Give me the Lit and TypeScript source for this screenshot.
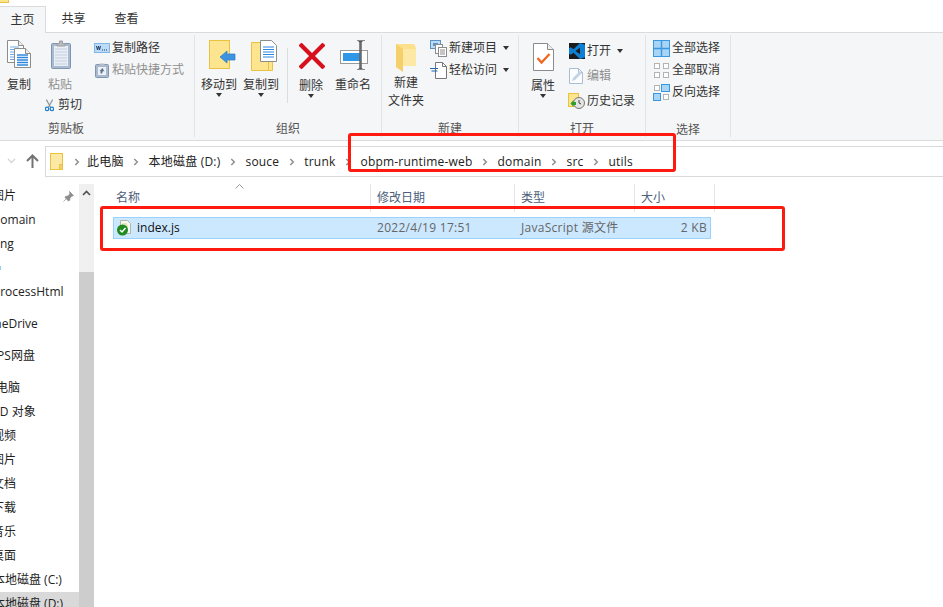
import { LitElement, html, css, svg } from "lit";
import { customElement } from "lit/decorators.js";

const I = {
  copy: svg`<svg width="24" height="28" viewBox="0 0 24 28"><path d="M.5.5h11l5 5v17H.5z" fill="#fff" stroke="#8c8c8c"/><path d="M11.5.5v5h5" fill="#eee" stroke="#8c8c8c"/><path d="M3 7h9M3 9.500h9M3 12h5M3 14.500h5M3 17h5M3 19.500h5" stroke="#6ea8e6"/><path d="M7.500 8.500h11l5 5v14h-16z" fill="#fff" stroke="#8c8c8c"/><path d="M18.500 8.500v5h5" fill="#eee" stroke="#8c8c8c"/><path d="M10 15h11M10 17.500h11M10 20h11M10 22.500h11M10 25h11" stroke="#2f86de" stroke-width="1.300"/></svg>`,
  paste: svg`<svg width="20" height="29" viewBox="0 0 20 29"><rect x=".5" y="3.500" width="19" height="25" rx="1" fill="#a9bad0" stroke="#8095b0"/><rect x="3" y="6" width="14" height="20" fill="#e9eef5"/><path d="M4 9h12M4 12h12M4 15h12M4 18h12M4 21h12M4 24h12" stroke="#c3cfde"/><path d="M6 6V3.500h2.500V1h3v2.500H14V6z" fill="#b9bcc2" stroke="#9a9da3"/></svg>`,
  path: svg`<svg width="16" height="10" viewBox="0 0 16 10"><rect x=".5" y=".5" width="15" height="9" fill="#bcdcf6" stroke="#7fb6e6"/><path d="M2.500 3l1 4 1-4 1 4 1-4" fill="none" stroke="#1f3f66"/><path d="M8 7h1M10 7h1M12 7h1" stroke="#1f3f66"/></svg>`,
  short: svg`<svg width="14" height="16" viewBox="0 0 14 16"><rect x=".5" y="2.500" width="13" height="13" rx="1" fill="#a9bad0" stroke="#8095b0"/><rect x="3" y="5" width="8" height="8" fill="#eef1f5"/><path d="M4.500 1.500h5v2h-5z" fill="#b9bcc2"/><path d="M5.500 11.500V9l-1 .1L7.500 6l2 3.500-1.500-.4-1 2.400z" fill="#5f7591"/></svg>`,
  cut: svg`<svg width="13" height="17" viewBox="0 0 13 17"><path d="M2 0l6 11M11 0L5 11" stroke="#8f949b" stroke-width="1.700" fill="none"/><circle cx="3" cy="13.500" r="2.500" fill="none" stroke="#1f7fd0" stroke-width="1.800"/><circle cx="10" cy="13.500" r="2.500" fill="none" stroke="#1f7fd0" stroke-width="1.800"/></svg>`,
  move: svg`<svg width="27" height="29" viewBox="0 0 27 29"><rect x=".5" y=".5" width="20" height="28" fill="#fde48f" stroke="#e9c23f"/><path d="M11 17l7-6v3h8v6h-8v3z" fill="#3e93e0" stroke="#2a7cc8" stroke-width=".7"/></svg>`,
  copyto: svg`<svg width="27" height="31" viewBox="0 0 27 31"><path d="M.5 2.500h21v28H.5z" fill="#fde48f" stroke="#e9c23f"/><path d="M17.500 3.500v27" stroke="#e9c23f" fill="none"/><path d="M9.500.5h11l5 5v16h-16z" fill="#fff" stroke="#8c8c8c"/><path d="M12 7h11M12 9.500h11M12 12h11M12 14.500h11M12 17h11" stroke="#2f86de"/></svg>`,
  del: svg`<svg width="26" height="26" viewBox="0 0 26 26"><path d="M2.500 2.500l21 21M23.500 2.500l-21 21" stroke="#d8101c" stroke-width="4.200" stroke-linecap="square"/></svg>`,
  rename: svg`<svg width="29" height="30" viewBox="0 0 29 30"><rect x=".5" y="10.500" width="27" height="13" fill="#fff" stroke="#9a9a9a"/><rect x="3" y="13" width="17" height="8" fill="#2f97e8"/><path d="M18 1h5l-1.500 1.500V28L23 29h-5l1.500-1V2.500z" fill="#555"/><path d="M17 .5h8M17 29.500h8" stroke="#8a8a8a"/><rect x="19.500" y="2" width="2" height="26" fill="#6a6a6a"/></svg>`,
  folder: svg`<svg width="21" height="29" viewBox="0 0 21 29"><path d="M0 1h18l2 4v18H7v5l-7-4z" fill="#fce08c"/><path d="M7 6l-7-5v23l7 5z" fill="#f5cf6a"/><path d="M7 6h13v17H7z" fill="#fde9a6"/></svg>`,
  newitem: svg`<svg width="17" height="17" viewBox="0 0 17 17"><rect x=".5" y=".5" width="10" height="8" fill="#bcdcf6" stroke="#5b93c7"/><rect x="3" y="3" width="5" height="3" fill="#5b93c7"/><rect x="5.500" y="4.500" width="7" height="9" fill="#fff" stroke="#8c8c8c"/><rect x="8.500" y="7.500" width="8" height="9" fill="#fff" stroke="#8c8c8c"/><path d="M10 10h5M10 12h5M10 14h5" stroke="#8c8c8c"/></svg>`,
  easy: svg`<svg width="17" height="17" viewBox="0 0 17 17"><path d="M5.500.5h7l4 4v12h-11z" fill="#fff" stroke="#777"/><path d="M12.500.5v4h4" fill="none" stroke="#777"/><path d="M0 6.500h8M1.500 9h6" stroke="#2068b0" stroke-width="1.200"/></svg>`,
  prop: svg`<svg width="21" height="28" viewBox="0 0 21 28"><path d="M.5.500h14l6 6v21H.5z" fill="#fff" stroke="#8c8c8c"/><path d="M14.500.5v6h6" fill="#eee" stroke="#8c8c8c"/><path d="M4.500 15l4 4.500 8-8.500" fill="none" stroke="#f0641e" stroke-width="2.200"/></svg>`,
  vscode: svg`<svg width="16" height="16" viewBox="0 0 16 16"><rect width="16" height="16" fill="#1b1b1b"/><path d="M11 0L4.500 6.300 1.800 4.200 0 5.300v5.400l1.800 1.100 2.700-2.100L11 16l5-1.800V1.800zM11 4.700v6.600L6.500 8z" fill="#0f7fd4"/></svg>`,
  edit: svg`<svg width="15" height="16" viewBox="0 0 15 16"><path d="M.5.500h9l4 4v11H.5z" fill="#fbfcfe" stroke="#a9bdd6"/><path d="M9.500.5v4h4" fill="none" stroke="#a9bdd6"/><path d="M3 13l1-3 7-7 2 2-7 7z" fill="#c3d3e6"/></svg>`,
  history: svg`<svg width="17" height="16" viewBox="0 0 17 16"><rect x=".5" y=".5" width="10" height="13" fill="#fde48f" stroke="#e9c23f"/><circle cx="11" cy="10" r="5.500" fill="#e4e4e4" stroke="#777"/><path d="M11 7v3l2 1" fill="none" stroke="#444"/><path d="M2.500 10.500l3-3.500v2h2.500v3H5.500v2z" fill="#2f9e2f"/></svg>`,
  all: svg`<svg width="17" height="17" viewBox="0 0 17 17"><rect x=".5" y=".5" width="16" height="16" fill="#a8d4f6" stroke="#3a97e2"/><path d="M8.500 0v17M0 8.500h17" stroke="#3a97e2" stroke-width="1.400"/></svg>`,
  none: svg`<svg width="17" height="17" viewBox="0 0 17 17"><g fill="#fff" stroke="#b4b4b4"><rect x="1.500" y="1.500" width="5" height="5"/><rect x="10.500" y="1.500" width="5" height="5"/><rect x="1.500" y="10.500" width="5" height="5"/><rect x="10.500" y="10.500" width="5" height="5"/></g></svg>`,
  inv: svg`<svg width="17" height="17" viewBox="0 0 17 17"><g fill="#fff" stroke="#b4b4b4"><rect x="1.500" y="1.500" width="5" height="5"/><rect x="10.500" y="10.500" width="5" height="5"/></g><g fill="#a8d4f6" stroke="#3a97e2"><rect x="8.500" y=".5" width="8" height="7"/><rect x=".5" y="9.500" width="7" height="7"/></g></svg>`,
  addr: svg`<svg width="13" height="17" viewBox="0 0 13 17"><rect x=".5" y=".5" width="12" height="16" fill="#fde9a6" stroke="#e9c23f"/><path d="M9.500 11.500h3v5h-3z" fill="#f5cf6a" stroke="#e9c23f"/></svg>`,
  file: svg`<svg width="14" height="16" viewBox="0 0 14 16"><path d="M3.500.5h7l3 3v10h-10z" fill="#f7f7f2" stroke="#b5b5ac"/><path d="M5 4h5M5 6h6" stroke="#d6d28a"/><circle cx="5.500" cy="10" r="5.500" fill="#1f8a1f"/><path d="M3 10l2 2 3.500-4" fill="none" stroke="#fff" stroke-width="1.500"/></svg>`,
  pin: svg`<svg width="11" height="11" viewBox="0 0 11 11"><path d="M6.500.5l4 4-1.500.6-2 2-.3 2.200-1.200.7-3.500-3.500.7-1.200 2.200-.3 2-2zM3 8l-2.500 2.500" fill="#8d8d8d" stroke="#8d8d8d" stroke-width=".7"/></svg>`,
  chev: svg`<svg width="6" height="8" viewBox="0 0 6 8"><path d="M1.300 1l3 3-3 3" fill="none" stroke="#8f8f8f" stroke-width="1.500"/></svg>`,
  up: svg`<svg width="13" height="14" viewBox="0 0 13 14"><path d="M6.500 14V2M1 7l5.500-5.500L12 7" fill="none" stroke="#737373" stroke-width="2"/></svg>`,
  down: svg`<svg width="9" height="6" viewBox="0 0 9 6"><path d="M1 1l3.500 3.500L8 1" fill="none" stroke="#d4d4d4" stroke-width="1.300"/></svg>`,
  sbUp: svg`<svg width="9" height="6" viewBox="0 0 9 6"><path d="M1 5l3.500-3.500L8 5" fill="none" stroke="#505050" stroke-width="1.600"/></svg>`,
  sort: svg`<svg width="9" height="5" viewBox="0 0 9 5"><path d="M.5 4.500l4-4 4 4" fill="none" stroke="#9a9a9a"/></svg>`,
};

const navRows = [
  { t: "图片", x: -8, pin: true },
  { t: "domain", x: -7 },
  { t: "ng", x: 0 },
  { t: "", x: 0, mark: true },
  { t: "ProcessHtml", x: -7 },
  { t: "OneDrive", x: -15, gap: true },
  { t: "WPS网盘", x: -14, gap: true },
  { t: "此电脑", x: -16, gap: true },
  { t: "3D 对象", x: -7 },
  { t: "视频", x: -8 },
  { t: "图片", x: -8 },
  { t: "文档", x: -8 },
  { t: "下载", x: -8 },
  { t: "音乐", x: -8 },
  { t: "桌面", x: -8 },
  { t: "本地磁盘 (C:)", x: -7 },
  { t: "本地磁盘 (D:)", x: -7, sel: true },
];
const crumbs = ["此电脑", "本地磁盘 (D:)", "souce", "trunk", "obpm-runtime-web", "domain", "src", "utils"];

@customElement("app-root")
export class AppRoot extends LitElement {
  static styles = css`
    :host { display: block; width: 943px; height: 607px; position: relative; overflow: hidden; background: #fff;
      font: 12px/16px "Open Sans", "Noto Sans CJK SC", sans-serif; color: #333; }
    .top { height: 6px; }
    .qa { display: block; width: 8px; height: 2px; background: #fde48f; border: solid #e9c23f; border-width: 0 1px 1px 0; }
    .tabs { height: 27px; display: flex; border-bottom: 1px solid #dadbdc; box-sizing: border-box; }
    .tab { width: 53px; text-align: center; line-height: 26px; }
    .tab.on { width: 46px; height: 27px; box-sizing: border-box; background: #f5f6f7; border: solid #dadbdc; border-width: 1px 1px 0 0; line-height: 25px; margin-right: 1px; }
    .ribbon { height: 108px; box-sizing: border-box; background: #f5f6f7; border-bottom: 1px solid #dadbdc; display: flex; padding-top: 2px; }
    .group { height: 102px; box-sizing: border-box; border-right: 1px solid #e2e3e4; display: flex; flex-direction: column; }
    .body { height: 85px; display: flex; }
    .glabel { height: 16px; line-height: 18px; text-align: center; color: #555; }
    .big { display: flex; flex-direction: column; align-items: center; padding-top: 5px; box-sizing: border-box; }
    .ibox { height: 36px; display: flex; align-items: flex-start; justify-content: center; box-sizing: border-box; }
    .big.tall .ibox { height: 37px; padding-top: 3px; }
    .big.nf .ibox { height: 34px; padding-top: 3px; }
    .big.sh3 .ibox { padding-left: 6px; }
    .big.sh1 .ibox { padding-left: 2px; }
    .w42 { width: 42px; } .w48 { width: 48px; } .w38 { width: 38px; } .w44 { width: 44px; }
    .big span { line-height: 18px; white-space: nowrap; text-align: center; }
    .dis { color: #8f8f8f; }
    .caret { width: 0; height: 0; border: 3.5px solid transparent; border-top: 4px solid #333; border-bottom: 0; }
    .big .caret { margin-top: -1px; }
    .col { display: flex; flex-direction: column; }
    .row { display: flex; align-items: center; height: 22px; gap: 2px; white-space: nowrap; }
    .row.r25 { height: 25px; }
    .ic { width: 17px; height: 17px; display: flex; align-items: center; justify-content: center; flex: none; }
    .row .caret { margin-left: 4px; }
    .g1 { display: grid; grid-template-columns: 38px 44px auto; grid-template-rows: 60px 20px; }
    .g1 .small { grid-column: 3; grid-row: 1 / 3; margin-left: 11px; padding-top: 2px; }
    .cut { grid-column: 1 / 3; grid-row: 2; margin-left: 45px; display: flex; align-items: center; gap: 4px; height: 20px; white-space: nowrap; }
    .vsep { width: 1px; height: 55px; background: #dcdddf; margin: 13px 2px 0 5px; }
    .addr { height: 36px; box-sizing: border-box; display: flex; align-items: flex-start; padding-top: 5px; }
    .nav { width: 45px; height: 30px; display: flex; align-items: center; padding-left: 7px; gap: 10px; box-sizing: border-box; flex: none; }
    .bar { flex: 1; height: 31px; box-sizing: border-box; border: 1px solid #d9d9d9; border-right: 0; display: flex; align-items: center; padding-left: 4px; color: #222; white-space: nowrap; letter-spacing: .2px; }
    .bar .f { display: flex; margin-right: 11px; }
    .bar .c { width: 25px; display: flex; justify-content: center; flex: none; }
    .bar .c.first { width: 6px; margin-right: 7px; }
    .main { display: flex; height: 430px; padding-top: 7px; box-sizing: border-box; }
    .sidebar { width: 79px; flex: none; overflow: hidden; color: #222; }
    .nrow { height: 24px; display: flex; align-items: center; white-space: nowrap; }
    .nrow.gap { margin-top: 8px; }
    .nrow.sel { background: #d9d9d9; }
    .nrow .pin { margin-left: auto; margin-right: 5px; display: flex; }
    .mark { width: 1px; height: 4px; background: #8fd0f5; }
    .sb { width: 15px; flex: none; display: flex; flex-direction: column; background: #f0f0f0; }
    .sb .a { height: 17px; display: flex; align-items: center; justify-content: center; }
    .sb .tr { height: 71px; }
    .sb .th { flex: 1; background: #cdcdcd; }
    .pane { flex: 1; padding-left: 19px; position: relative; }
    .head { display: grid; grid-template-columns: 258px 144px 120px 80px; width: 602px; height: 27px; color: #4c607a; }
    .head div { border-right: 1px solid #e5e5e5; padding-left: 6px; line-height: 28px; box-sizing: border-box; }
    .head div:first-child { padding-left: 3px; }
    .sort { position: absolute; left: 141px; top: 0; display: flex; }
    .frow { margin-top: 6px; width: 598px; height: 22px; box-sizing: border-box; background: #cce8ff; border: 1px solid #99d1ff; display: grid; grid-template-columns: 257px 144px 120px 75px; line-height: 20px; color: #666; }
    .frow .n { display: flex; align-items: center; gap: 6px; padding-left: 3px; color: #111; }
    .frow .n svg { display: block; }
    .frow .p { padding-left: 6px; white-space: nowrap; letter-spacing: .28px; }
    .frow .r { text-align: right; padding-right: 3px; }
    .mark-box { position: absolute; box-sizing: border-box; border: 3px solid #ff1a10; border-radius: 3px; pointer-events: none; }
    .m1 { left: 348px; top: 133px; width: 328px; height: 39px; }
    .m2 { left: 100px; top: 206px; width: 685px; height: 45px; }
  `;

  big(icon: unknown, label: unknown, w: string, caret = false, mod = "", dis = false) {
    return html`<div class="big ${w} ${mod}"><div class="ibox">${icon}</div>
      <span class=${dis ? "dis" : ""}>${label}</span>${caret ? html`<i class="caret"></i>` : ""}</div>`;
  }
  small(icon: unknown, label: string, caret = false, dis = false, r25 = false) {
    return html`<div class="row ${r25 ? "r25" : ""}"><div class="ic">${icon}</div>
      <span class=${dis ? "dis" : ""}>${label}</span>${caret ? html`<i class="caret"></i>` : ""}</div>`;
  }

  render() {
    return html`
      <div class="top"><i class="qa"></i></div>
      <div class="tabs"><div class="tab on">主页</div><div class="tab">共享</div><div class="tab">查看</div></div>
      <div class="ribbon">
        <div class="group" style="width:195px">
          <div class="body g1">
            ${this.big(I.copy, "复制", "w38")}
            ${this.big(I.paste, "粘贴", "w44", false, "sh1", true)}
            <div class="col small">
              ${this.small(I.path, "复制路径")}
              ${this.small(I.short, "粘贴快捷方式", false, true)}
            </div>
            <div class="cut">${I.cut}<span>剪切</span></div>
          </div>
          <div class="glabel" style="padding-right:62px">剪贴板</div>
        </div>
        <div class="group" style="width:187px">
          <div class="body" style="padding-left:3px">
            ${this.big(I.move, "移动到", "w42", true, "sh3")}
            ${this.big(I.copyto, "复制到", "w42", true, "sh3")}
            <div class="vsep"></div>
            ${this.big(I.del, "删除", "w42", true, "tall sh1")}
            ${this.big(I.rename, "重命名", "w42", false, "sh1")}
          </div>
          <div class="glabel">组织</div>
        </div>
        <div class="group" style="width:137px">
          <div class="body">
            ${this.big(I.folder, html`新建<br />文件夹`, "w48", false, "nf")}
            <div class="col" style="padding-top:2px">
              ${this.small(I.newitem, "新建项目", true)}
              ${this.small(I.easy, "轻松访问", true)}
            </div>
          </div>
          <div class="glabel">新建</div>
        </div>
        <div class="group" style="width:127px">
          <div class="body">
            ${this.big(I.prop, "属性", "w48", true, "tall")}
            <div class="col" style="padding-top:3px;margin-left:1px">
              ${this.small(I.vscode, "打开", true, false, true)}
              ${this.small(I.edit, "编辑", false, true, true)}
              ${this.small(I.history, "历史记录", false, false, true)}
            </div>
          </div>
          <div class="glabel">打开</div>
        </div>
        <div class="group" style="width:85px">
          <div class="body col" style="padding:2px 0 0 7px">
            ${this.small(I.all, "全部选择")}
            ${this.small(I.none, "全部取消")}
            ${this.small(I.inv, "反向选择")}
          </div>
          <div class="glabel">选择</div>
        </div>
      </div>
      <div class="addr">
        <div class="nav">${I.down}${I.up}</div>
        <div class="bar">
          <span class="f">${I.addr}</span>
          ${crumbs.map((c, i) => html`<span class="c ${i === 0 ? "first" : ""}">${I.chev}</span><span>${c}</span>`)}
        </div>
      </div>
      <div class="main">
        <div class="sidebar">
          ${navRows.map((r) => html`<div class="nrow ${r.gap ? "gap" : ""} ${r.sel ? "sel" : ""}">
            ${r.mark ? html`<i class="mark"></i>` : html`<span style="margin-left:${r.x}px">${r.t}</span>`}
            ${r.pin ? html`<span class="pin">${I.pin}</span>` : ""}
          </div>`)}
        </div>
        <div class="sb"><div class="a">${I.sbUp}</div><div class="tr"></div><div class="th"></div></div>
        <div class="pane">
          <span class="sort">${I.sort}</span>
          <div class="head"><div>名称</div><div>修改日期</div><div>类型</div><div>大小</div></div>
          <div class="frow">
            <div class="n">${I.file}<span>index.js</span></div>
            <div class="p">2022/4/19 17:51</div>
            <div class="p">JavaScript 源文件</div>
            <div class="p r">2 KB</div>
          </div>
        </div>
      </div>
      <div class="mark-box m1"></div>
      <div class="mark-box m2"></div>
    `;
  }
}
